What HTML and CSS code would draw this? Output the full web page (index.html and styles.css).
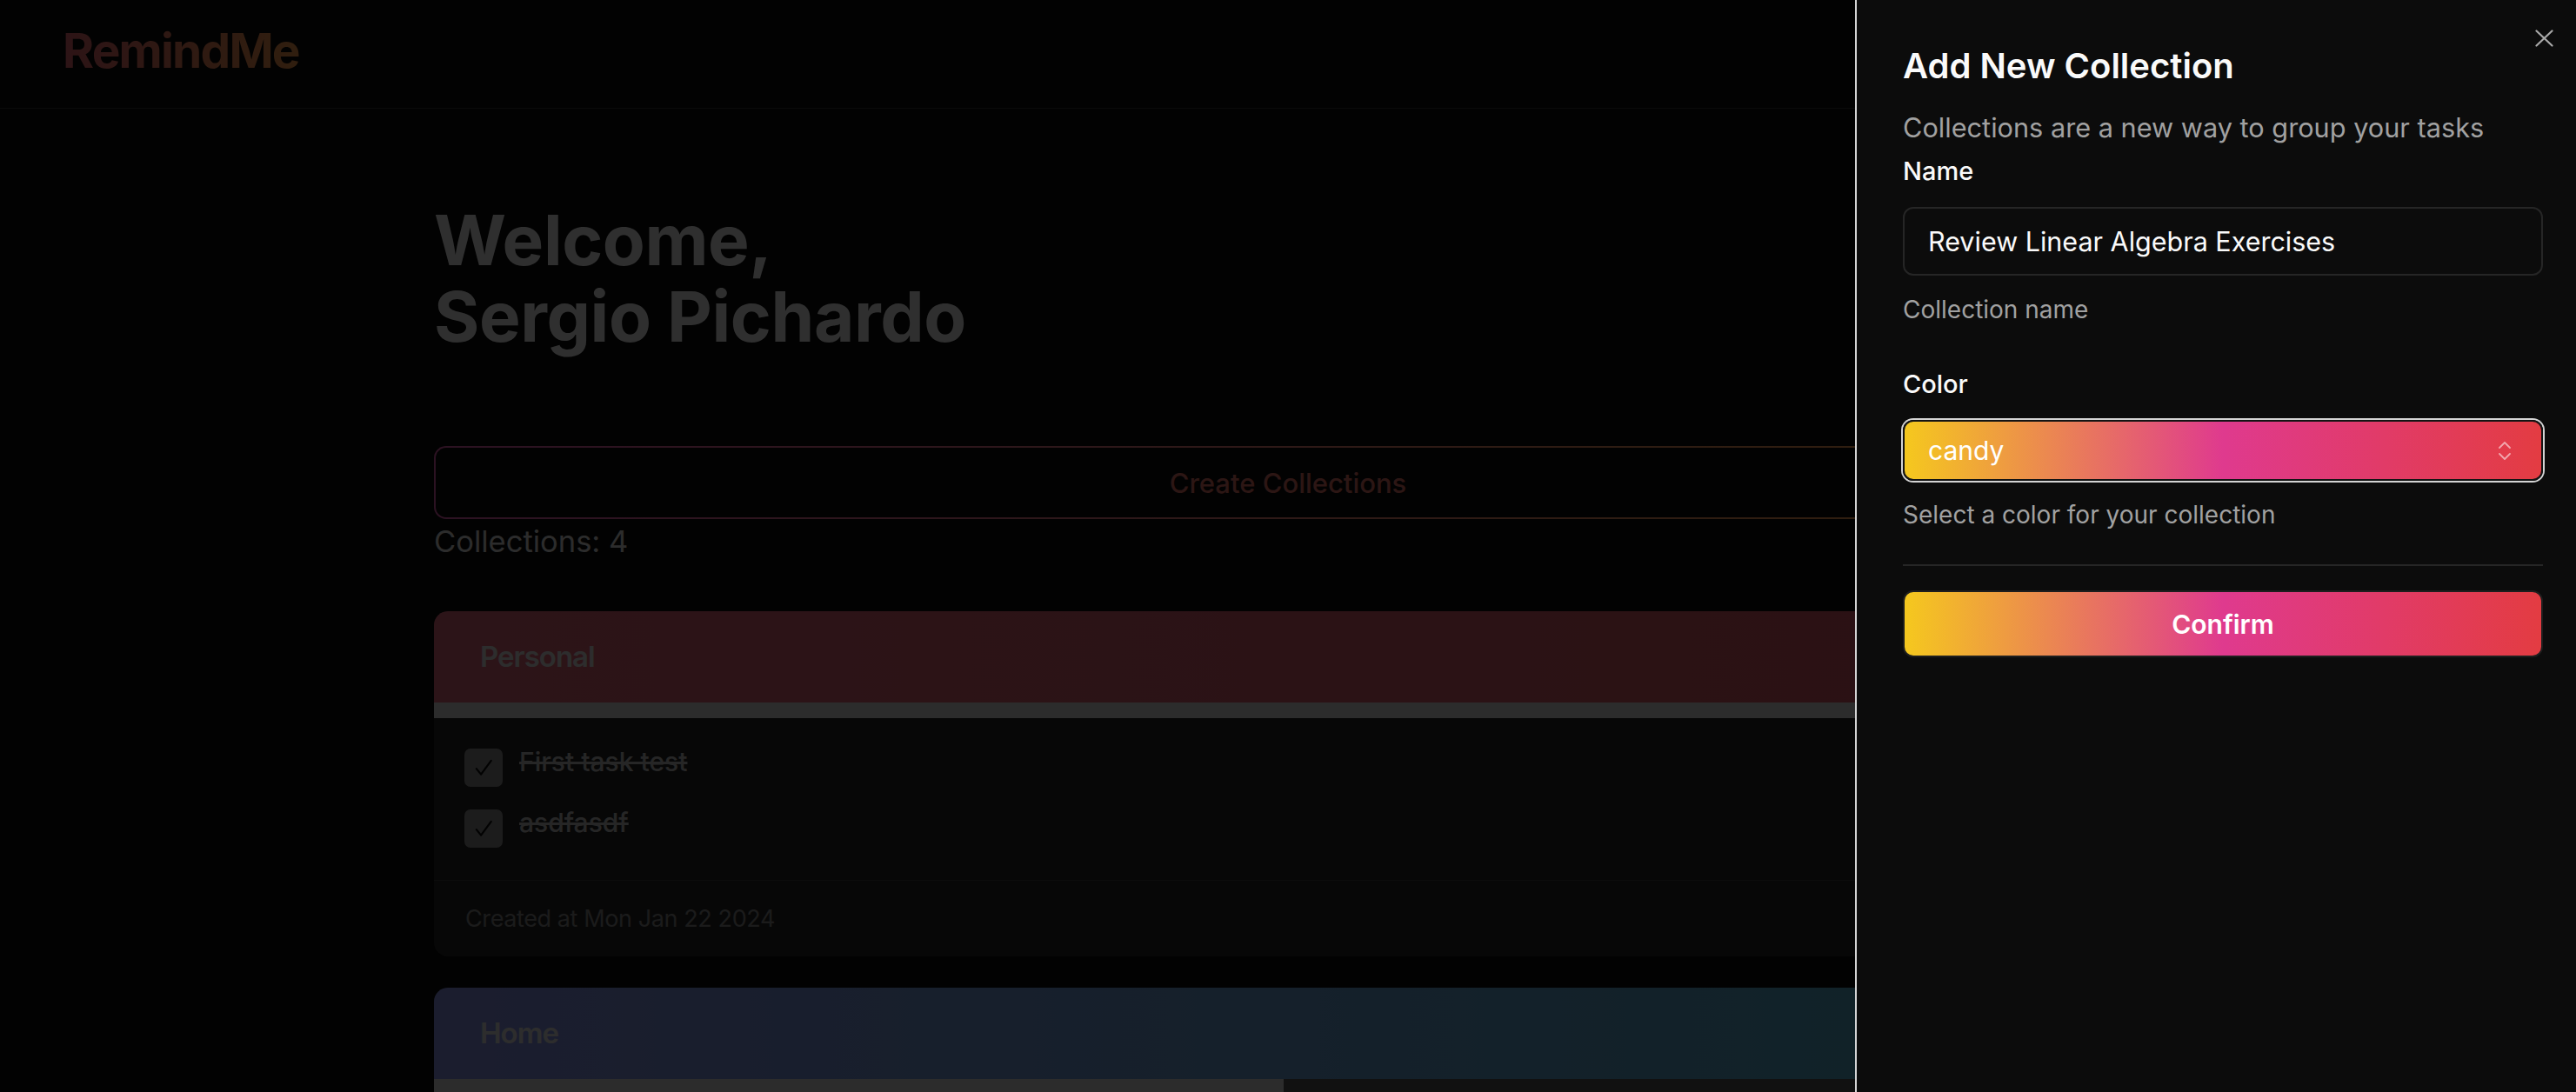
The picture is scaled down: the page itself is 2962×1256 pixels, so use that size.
FILE: index.html
```html
<!DOCTYPE html>
<html lang="en">
<head>
<meta charset="utf-8">
<title>RemindMe</title>
<link rel="stylesheet" href="styles.css">
</head>
<body>
<div class="app">
  <nav class="navbar">
    <span class="logo">RemindMe</span>
  </nav>
  <main class="main">
    <h1 class="welcome">Welcome,<br>Sergio Pichardo</h1>
    <button class="create-btn" type="button"><span class="create-btn-text">Create Collections</span></button>
    <p class="count">Collections: 4</p>
    <div class="collections">
      <section class="card">
        <header class="card-head card-head--personal"><h2 class="card-title">Personal</h2></header>
        <div class="progress"><div class="progress-fill" style="width:100%"></div></div>
        <div class="card-body">
          <label class="task">
            <span class="checkbox"><svg width="28" height="28" viewBox="0 0 24 24" fill="none" stroke="currentColor" stroke-width="1.9" stroke-linecap="round" stroke-linejoin="round"><path d="M19.5 5 9.5 18.5 5 13"/></svg></span>
            <span class="task-text">First task test</span>
          </label>
          <label class="task">
            <span class="checkbox"><svg width="28" height="28" viewBox="0 0 24 24" fill="none" stroke="currentColor" stroke-width="1.9" stroke-linecap="round" stroke-linejoin="round"><path d="M19.5 5 9.5 18.5 5 13"/></svg></span>
            <span class="task-text">asdfasdf</span>
          </label>
        </div>
        <footer class="card-foot">Created at Mon Jan 22 2024</footer>
      </section>
      <section class="card">
        <header class="card-head card-head--home"><h2 class="card-title">Home</h2></header>
        <div class="progress"><div class="progress-fill" style="width:49.75%"></div></div>
        <div class="card-body card-body--empty"></div>
      </section>
    </div>
  </main>
</div>

<div class="overlay"></div>

<aside class="sheet">
  <button class="sheet-close" type="button" aria-label="Close">
    <svg width="21" height="20" viewBox="0 0 21 20" fill="none" stroke="currentColor" stroke-width="2.2" stroke-linecap="round"><path d="M1.5 1.5 19.5 18.5M19.5 1.5 1.5 18.5"/></svg>
  </button>
  <h2 class="sheet-title">Add New Collection</h2>
  <p class="sheet-desc">Collections are a new way to group your tasks</p>

  <form class="form">
    <label class="field-label" for="name">Name</label>
    <input class="text-input" id="name" type="text" value="Review Linear Algebra Exercises">
    <p class="field-help field-help--name">Collection name</p>

    <label class="field-label field-label--color">Color</label>
    <button class="select-trigger" type="button">
      <span class="select-value">candy</span>
      <svg class="select-icon" width="14" height="22" viewBox="0 0 14 22" fill="none" stroke="currentColor" stroke-width="1.8" stroke-linecap="round" stroke-linejoin="round"><path d="M1 8 7 2l6 6M1 15l6 6 6-6"/></svg>
    </button>
    <p class="field-help">Select a color for your collection</p>

    <hr class="separator">

    <button class="confirm" type="button">Confirm</button>
  </form>
</aside>
</body>
</html>
```

FILE: styles.css
```css
* {
  box-sizing: border-box;
  margin: 0;
  padding: 0;
}

html,
body {
  height: 100%;
  overflow: hidden;
}

body {
  background: #0a0a0a;
  color: #ececec;
  font-family: Inter, "Noto Sans", "Liberation Sans", sans-serif;
}

/* ---------- navbar ---------- */
.navbar {
  height: 125px;
  border-bottom: 1px solid #363636;
  padding: 25px 72px 0;
}

.logo {
  display: inline-block;
  font-size: 55px;
  line-height: 66px;
  font-weight: 700;
  letter-spacing: -1.8px;
  background: linear-gradient(90deg, #e0646e, #f0964a);
  -webkit-background-clip: text;
  background-clip: text;
  color: transparent;
}

/* ---------- main ---------- */
.main {
  width: 1964px;
  margin: 0 auto;
  padding-top: 107px;
}

.welcome {
  font-size: 80px;
  line-height: 88px;
  font-weight: 700;
  letter-spacing: -0.4px;
  color: #ececec;
}

.create-btn {
  display: flex;
  align-items: center;
  justify-content: center;
  width: 100%;
  height: 84px;
  margin-top: 105px;
  border: 2px solid transparent;
  border-radius: 14px;
  background:
    linear-gradient(#0a0a0a, #0a0a0a) padding-box,
    linear-gradient(90deg, #dc5aaa, #eba03c) border-box;
  font-family: inherit;
  font-size: 31px;
  font-weight: 500;
  line-height: 1;
  color: #dc6e64;
}

.count {
  font-size: 34.5px;
  line-height: 51px;
  color: #dcdcdc;
}

.collections {
  display: flex;
  flex-direction: column;
  gap: 36px;
  margin-top: 55px;
}

.card {
  border-radius: 16px;
  overflow: hidden;
  background: #262626;
}

.card-head {
  display: flex;
  align-items: center;
  height: 105px;
  padding-left: 53px;
}

.card-head--personal {
  background: linear-gradient(90deg, #dc6478, #d2555f);
}

.card-head--home {
  background: linear-gradient(90deg, #8791e6, #4bafc3);
}

.card-title {
  font-size: 33px;
  line-height: 1;
  font-weight: 600;
  letter-spacing: -1px;
  color: #e1e1e1;
}

.progress {
  height: 18px;
  background: #555555;
}

.progress-fill {
  height: 100%;
  background: #dcdcdc;
}

.card-body {
  display: flex;
  flex-direction: column;
  gap: 26px;
  padding: 35px 35px 37px;
}

.card-body--empty {
  height: 200px;
}

.task {
  display: flex;
  align-items: flex-start;
  gap: 19px;
}

.checkbox {
  display: flex;
  align-items: center;
  justify-content: center;
  width: 44px;
  height: 44px;
  border-radius: 7px;
  background: #8c8c8c;
  color: #0c0c0c;
}

.task-text {
  font-size: 30px;
  line-height: 30px;
  font-weight: 500;
  color: #bebebe;
  text-decoration: line-through;
}

.card-foot {
  display: flex;
  align-items: center;
  height: 88px;
  padding-left: 36px;
  border-top: 1px solid #3c3c3c;
  font-size: 27px;
  letter-spacing: -0.4px;
  color: #878787;
}

/* ---------- overlay + sheet ---------- */
.overlay {
  position: fixed;
  inset: 0;
  background: rgba(0, 0, 0, 0.8);
}

.sheet {
  position: fixed;
  top: 0;
  right: 0;
  bottom: 0;
  width: 829px;
  padding: 48px 38px 0 53px;
  background: #0c0c0c;
  border-left: 2px solid #d4d4d4;
  color: #fafafa;
}

.sheet-close {
  position: absolute;
  top: 34px;
  right: 26px;
  display: flex;
  border: 0;
  background: none;
  color: #a9a9a9;
}

.sheet-title {
  font-size: 40px;
  line-height: 56px;
  font-weight: 600;
  color: #fafafa;
}

.sheet-desc {
  margin-top: 22px;
  font-size: 30.7px;
  line-height: 42px;
  color: #a1a1a1;
}

.form {
  display: flex;
  flex-direction: column;
}

.field-label {
  margin-top: 8px;
  font-size: 29px;
  line-height: 42px;
  font-weight: 500;
  color: #fafafa;
}

.field-label--color {
  margin-top: 45px;
}

.text-input {
  height: 79px;
  margin-top: 20px;
  padding: 0 27px;
  border: 2px solid #262626;
  border-radius: 12px;
  background: transparent;
  font-family: inherit;
  font-size: 30.5px;
  color: #fafafa;
  outline: none;
}

.field-help {
  margin-top: 19px;
  font-size: 28px;
  line-height: 40px;
  color: #a1a1a1;
}

.select-trigger {
  display: flex;
  align-items: center;
  justify-content: space-between;
  height: 70px;
  margin-top: 20px;
  padding: 0 35px 0 27px;
  border: 2px solid #141414;
  border-radius: 12px;
  background: linear-gradient(90deg, #f5c81e, #df3a8e 50%, #e33c42);
  box-shadow: 0 0 0 2px #d4d4d4;
  font-family: inherit;
  font-size: 30px;
  color: #ffffff;
}

.select-icon {
  color: rgba(255, 255, 255, 0.55);
}

.separator {
  height: 2px;
  margin-top: 37px;
  border: 0;
  background: #262626;
}

.confirm {
  height: 77px;
  margin-top: 28px;
  border: 2px solid #1e1e1e;
  border-radius: 12px;
  background: linear-gradient(90deg, #f5c81e, #df3a8e 50%, #e33c42);
  font-family: inherit;
  font-size: 30px;
  font-weight: 600;
  color: #ffffff;
}
```
